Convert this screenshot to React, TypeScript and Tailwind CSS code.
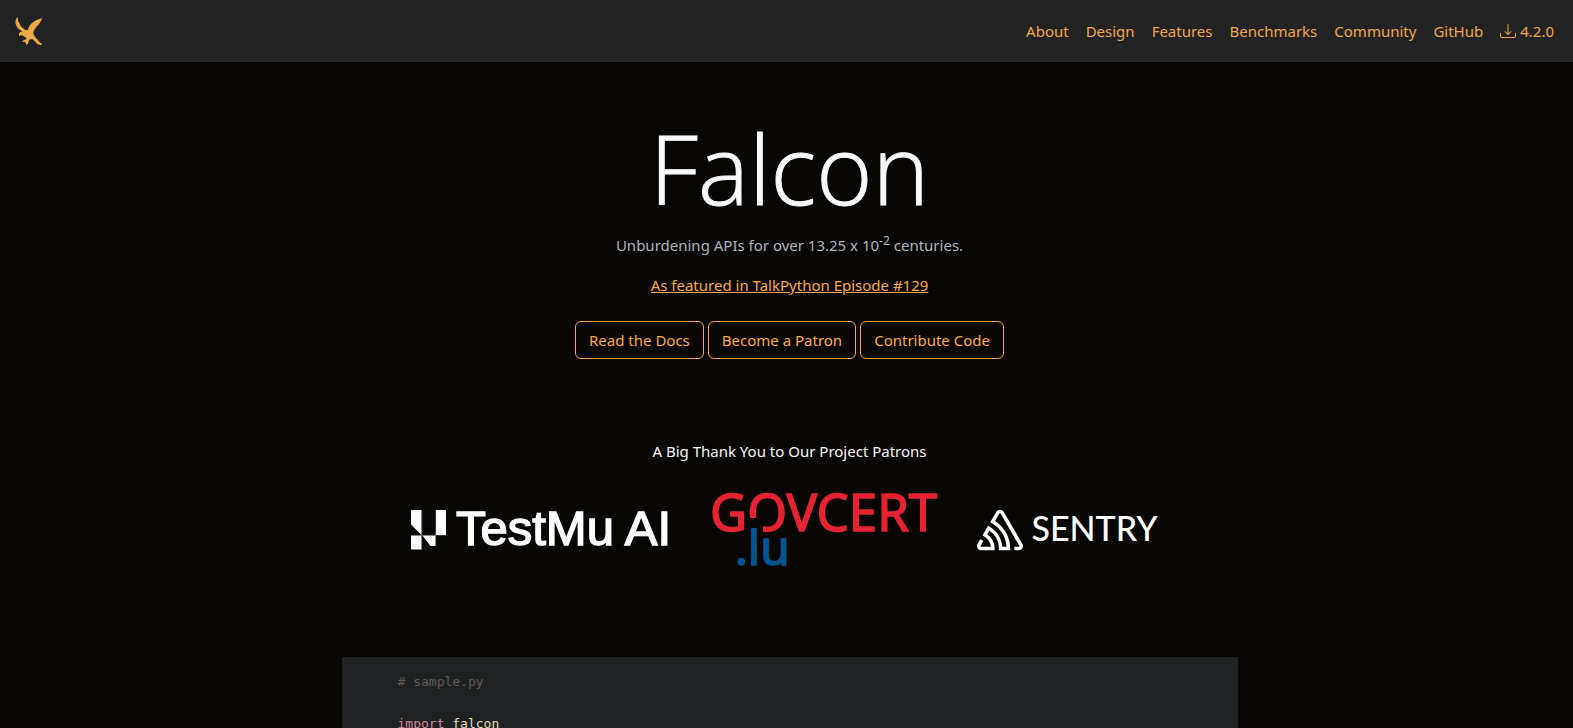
import { BsDownload } from "react-icons/bs";
import { SiSentry } from "react-icons/si";

const navLinks = ["About", "Design", "Features", "Benchmarks", "Community", "GitHub"];
const actions = ["Read the Docs", "Become a Patron", "Contribute Code"];

function FalconMark() {
  return (
    <svg viewBox="45 48 84 90" className="h-[30px] w-7" fill="currentColor" aria-hidden="true">
      <path d="M54 50C47 55 45 65 47 73C50 82 56 89 64 92C66 93 67 94 65 95C60 95 57 98 57 102L57 109L61 106C66 106 69 108 74 110L80 115C78 119 73 121 68 122L67 126L72 125L77 126L74 130L78 129L79 135L84 131L86 124L88 119C92 118 97 117 100 119L107 127L113 133L119 134L125 135L126 131L119 127L109 115C104 109 100 103 100 98C101 91 105 86 111 79C118 72 124 64 126 54C115 57 102 63 95 70C88 77 85 85 83 91C77 91 71 88 66 82C60 77 60 71 56 66C53 60 53 55 54 50Z" />
    </svg>
  );
}

function TestMuLogo() {
  return (
    <a href="#testmu" aria-label="TestMu AI">
      <svg viewBox="0 0 258 42" className="h-[42px] w-[258px] overflow-visible" fill="#fff">
        <path d="M0 1H10.5V26L0 15.5ZM25 1H35V26H25ZM0 26.5H10.5V40.5H0ZM11.5 26.5H24.5V37H19.5Z" />
        <path d="M10.8 1V40.5M24.7 1V37M0 26.3H35" stroke="#8a8a86" strokeWidth="0.5" />
        <text x="45" y="36" stroke="#fff" strokeWidth="1.5" className="font-['Liberation_Sans'] text-[49px]">TestMu AI</text>
      </svg>
    </a>
  );
}

function GovCertLogo() {
  return (
    <a href="#govcert" aria-label="GOVCERT.lu">
      <svg viewBox="0 0 220 78" className="h-[78px] w-[220px] overflow-visible">
        <text x="-3" y="40" fill="#e62333" stroke="#e62333" strokeWidth="1.5" className="font-['Noto_Sans'] text-[51px]">GOVCERT</text>
        <path d="M34 27H50V44H34Z" fill="#080602" />
        <text x="22" y="74" fill="#045591" stroke="#045591" strokeWidth="1.5" className="font-['Noto_Sans'] text-[48px]">.lu</text>
      </svg>
    </a>
  );
}

function SentryLogo() {
  return (
    <a href="#sentry" aria-label="Sentry" className="flex items-center gap-2 text-white">
      <SiSentry className="size-[46px]" />
      <span className="pb-1 font-['Lato'] text-[34px] leading-10 font-medium">SENTRY</span>
    </a>
  );
}

export default function App() {
  return (
    <div className="min-h-screen bg-[#080602] font-['Noto_Sans',sans-serif] text-[15px] leading-6 text-[#f8f9fa]">
      <header className="flex h-[62px] items-center justify-between bg-[#232323] px-[15px] text-[#eea849]">
        <a href="#home" aria-label="Falcon home">
          <FalconMark />
        </a>
        <nav className="flex gap-[17px] pr-1">
          {navLinks.map((label) => (
            <a key={label} href={`#${label.toLowerCase()}`}>{label}</a>
          ))}
          <a href="#download" className="flex items-center gap-1">
            <BsDownload className="size-4" />
            4.2.0
          </a>
        </nav>
      </header>
      <main className="flex flex-col items-center pl-1.5">
        <section className="flex flex-col items-center pt-12 text-center">
          <h1 className="font-['Open_Sans'] text-[96px] leading-[115px] font-light [-webkit-text-stroke:1px_#f8f9fa]">Falcon</h1>
          <p className="mt-2 text-[#adb5bd]">
            Unburdening APIs for over 13.25 x 10<sup className="text-xs">-2</sup> centuries.
          </p>
          <a href="#talkpython" className="mt-4 text-[#ffac41] underline">As featured in TalkPython Episode #129</a>
          <div className="mt-6 flex gap-1">
            {actions.map((label) => (
              <button key={label} type="button" className="h-[38px] rounded-md border border-[#ffac41] px-[13px] text-[#ffac41]">
                {label}
              </button>
            ))}
          </div>
        </section>
        <section className="mt-20 flex flex-col items-center">
          <h2>A Big Thank You to Our Project Patrons</h2>
          <div className="mt-7 flex items-center gap-11 pr-2.5">
            <TestMuLogo />
            <GovCertLogo />
            <SentryLogo />
          </div>
        </section>
        <pre className="mt-[88px] w-full max-w-[896px] bg-[#1f2223] px-14 pt-[15px] text-[13px] leading-5">
          <code className="font-['DejaVu_Sans_Mono',monospace]">
            <span className="text-[#655b53]"># sample.py</span>
            {"\n\n"}
            <span className="text-[#d3869b]">import</span> <span className="text-[#ebdbb2]">falcon</span>
          </code>
        </pre>
      </main>
    </div>
  );
}
